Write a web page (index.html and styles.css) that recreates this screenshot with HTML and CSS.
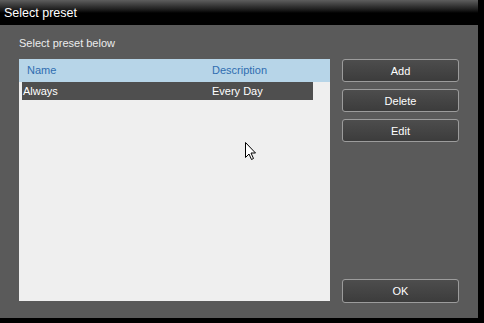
FILE: index.html
```html
<!DOCTYPE html>
<html lang="en">
<head>
  <meta charset="UTF-8">
  <title>Select preset</title>
  <link rel="stylesheet" href="styles.css">
</head>
<body>

  <div class="window">
    <div class="titlebar">Select preset</div>

    <div class="content">
      <p class="hint">Select preset below</p>

      <div class="main">
        <div class="list">
          <div class="list-head">
            <span>Name</span>
            <span>Description</span>
          </div>
          <div class="list-row selected">
            <span>Always</span>
            <span>Every Day</span>
          </div>
        </div>

        <div class="actions">
          <button>Add</button>
          <button>Delete</button>
          <button>Edit</button>
          <button class="ok">OK</button>
        </div>
      </div>
    </div>
  </div>

  <svg class="cursor" width="12" height="19" viewBox="0 0 12 19">
    <path d="M0.5 0.5 L0.5 15.5 L4 12 L6.5 17.5 L8.5 16.5 L6 11 L10.5 11 Z" fill="#fff" stroke="#000" stroke-width="1"/>
  </svg>

</body>
</html>
```

FILE: styles.css
```css
body {
  margin: 0;
  background: #000;
  font-family: "Liberation Sans", Arial, sans-serif;
  font-size: 11px;
  color: #fff;
  height: 323px;
  overflow: hidden;
}
.window {
  width: 478px;
}
.titlebar {
  height: 25px;
  line-height: 27px;
  padding-left: 4px;
  font-size: 12.5px;
  background: linear-gradient(#5e5e5e, #1a1a1a 10px, #000 13px);
}
.content {
  height: 282px;
  padding: 11px 0 0 19px;
  background: #5a5a5a;
}
.hint {
  margin: 0;
  height: 14px;
  line-height: 14px;
  color: #ececec;
}
.main {
  display: flex;
  gap: 12px;
  margin-top: 9px;
}
.list {
  width: 311px;
  height: 242px;
  background: #efefef;
}
.list-head {
  display: grid;
  grid-template-columns: 193px 1fr;
  height: 23px;
  line-height: 23px;
  background: #b7d5e8;
  color: #2f6db0;
}
.list-head span:first-child {
  padding-left: 8px;
}
.list-row {
  display: grid;
  grid-template-columns: 189px 1fr;
  width: 290px;
  height: 18px;
  line-height: 18px;
  margin-left: 3px;
  padding-left: 1px;
}
.selected {
  background: #4f4f4f;
  color: #fff;
}
.actions {
  width: 117px;
  height: 244px;
  display: flex;
  flex-direction: column;
  gap: 7px;
}
button {
  height: 23px;
  padding: 0;
  font-family: inherit;
  font-size: 11px;
  color: #fff;
  background: linear-gradient(#4d4d4d, #3c3c3c);
  border: 1px solid #9c9c9c;
  border-radius: 3px;
}
.ok {
  margin-top: auto;
  height: 24px;
}
.cursor {
  position: absolute;
  left: 245px;
  top: 142px;
}
```
